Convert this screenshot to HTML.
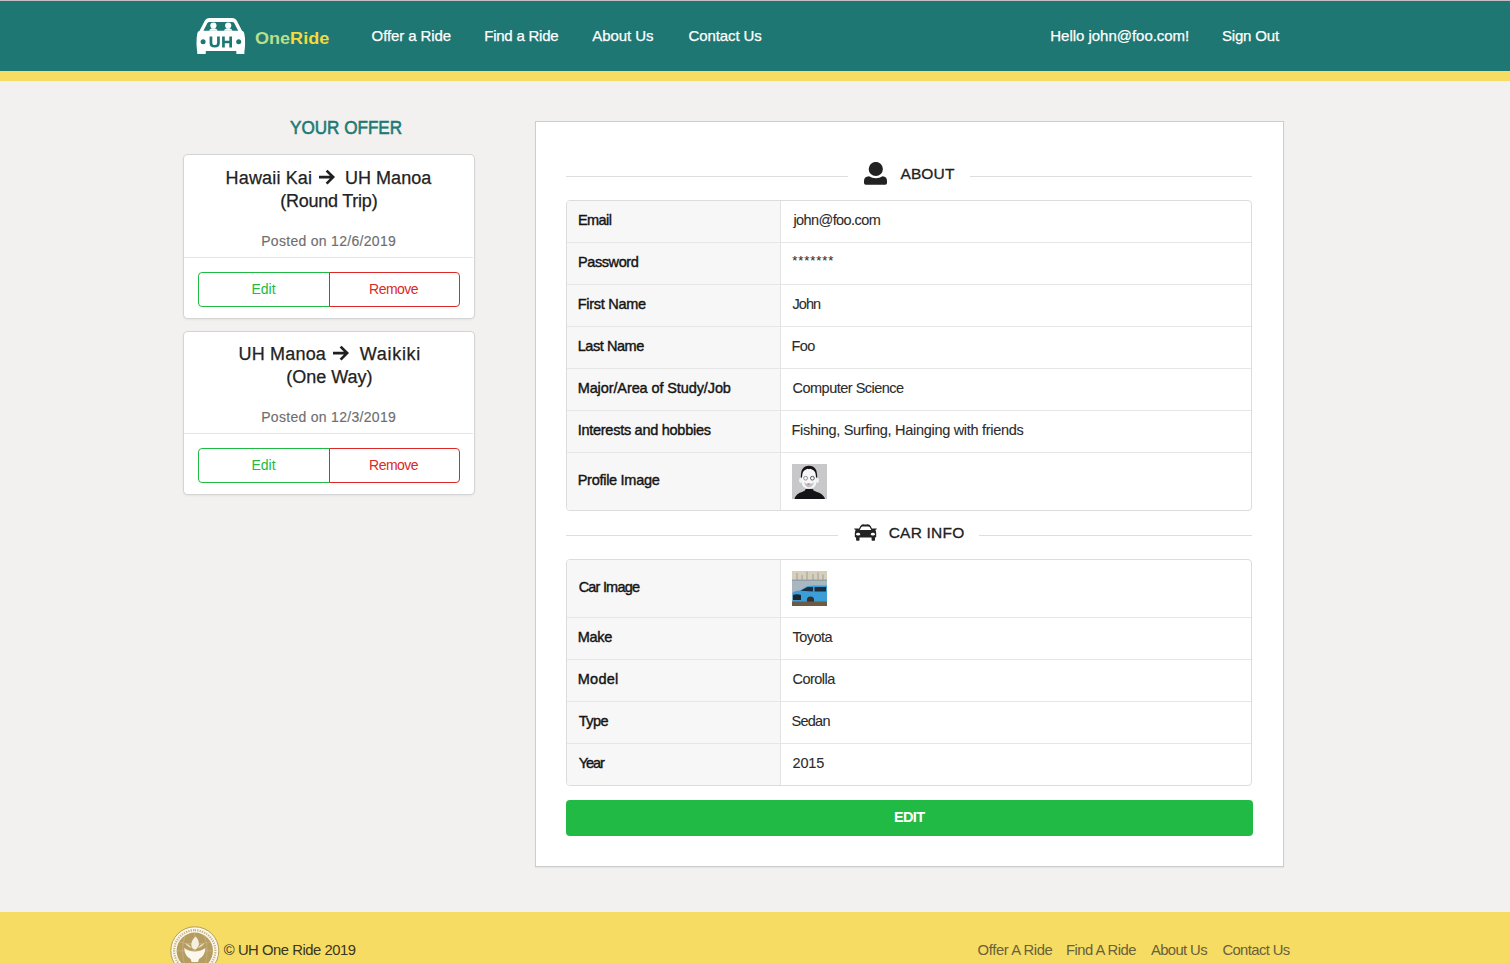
<!DOCTYPE html>
<html>
<head>
<meta charset="utf-8">
<style>
html,body{margin:0;padding:0;}
body{width:1510px;height:963px;overflow:hidden;position:relative;background:#f2f1ef;font-family:"Liberation Sans",sans-serif;}
.t{position:absolute;white-space:nowrap;line-height:1;}
.nav{font-size:15px;color:#fff;-webkit-text-stroke:0.25px #fff;}
.card{position:absolute;left:184px;width:290px;background:#fff;border-radius:4px;box-shadow:0 1px 3px 0 #d4d4d5,0 0 0 1px #d4d4d5;}
.hd{font-size:18px;color:#222;-webkit-text-stroke:0.25px #222;}
.meta{font-size:14px;color:#6e6e6e;-webkit-text-stroke:0.15px #6e6e6e;}
.btn{position:absolute;top:272px;height:35px;box-sizing:border-box;background:#fff;}
.be{left:198px;width:132px;border:1px solid #21ba45;border-radius:4px 0 0 4px;}
.br{left:329px;width:131px;border:1px solid #db2828;border-radius:0 4px 4px 0;}
.bt{font-size:14px;}
.seg{position:absolute;left:535px;top:121px;width:749px;height:746px;box-sizing:border-box;background:#fff;border:1px solid #cdcdcd;box-shadow:0 1px 1px 0 rgba(34,36,38,.06);}
.line{position:absolute;height:1px;background:#dedede;}
.tbl{position:absolute;left:566px;width:686px;box-sizing:border-box;border:1px solid #dcdcdc;border-radius:4px;overflow:hidden;background:#fff;}
.col1{position:absolute;left:0;top:0;bottom:0;width:213px;background:#f7f7f7;border-right:1px solid #e3e3e3;}
.rowb{position:absolute;left:0;right:0;height:1px;background:#e6e6e6;}
.lab{font-size:14.5px;color:#141414;-webkit-text-stroke:0.4px #141414;}
.val{font-size:14.5px;color:#2c2c2c;-webkit-text-stroke:0.1px #2c2c2c;}
.ft{font-size:14.8px;color:#68613c;}
</style>
</head>
<body>
<!-- top line + navbar -->
<div style="position:absolute;left:0;top:0;width:1510px;height:1px;background:#c6bec3"></div>
<div style="position:absolute;left:0;top:1px;width:1510px;height:70px;background:#1e7772"></div>
<div style="position:absolute;left:0;top:71px;width:1510px;height:10px;background:#f6dc62"></div>

<!-- logo -->
<svg style="position:absolute;left:190px;top:14px" width="60" height="46" viewBox="0 0 60 46">
  <path fill="#fff" d="M9.6 16.7 L14.6 7 Q16.2 4.1 19.6 4.1 H42 Q45.4 4.1 47 7 L52 16.7 Q53.6 16.9 54.2 19 Q55.4 24 55.1 30 Q54.9 35 54.4 37.5 V39.2 Q54.4 40.1 53.5 40.1 H47.2 Q46.3 40.1 46.3 39.2 V37 H15.8 V39.2 Q15.8 40.1 14.9 40.1 H8.1 Q7.2 40.1 7.2 39.2 V37.5 Q6.7 35 6.5 30 Q6.3 24 7.4 19 Q8 16.9 9.6 16.7 Z"/>
  <path fill="#1e7772" d="M13.4 16.7 L17.4 8.9 Q18 7.9 19.3 7.9 H42.3 Q43.6 7.9 44.2 8.9 L48.2 16.7 Z"/>
  <circle cx="23.4" cy="11.5" r="3.1" fill="#fff"/>
  <circle cx="38.2" cy="11.5" r="3.1" fill="#fff"/>
  <path fill="#fff" d="M19.2 16.8 Q19.6 14.3 23.4 14.3 Q27.2 14.3 27.6 16.8 Z M34 16.8 Q34.4 14.3 38.2 14.3 Q42 14.3 42.4 16.8 Z"/>
  <circle cx="13.1" cy="27.7" r="2.5" fill="#1e7772"/>
  <circle cx="48.7" cy="27.7" r="2.5" fill="#1e7772"/>
  <path fill="#1e7772" d="M19.6 22.5 H22.3 V28.9 Q22.3 31.1 24.7 31.1 Q27.1 31.1 27.1 28.9 V22.5 H29.8 V29.2 Q29.8 33.6 24.7 33.6 Q19.6 33.6 19.6 29.2 Z M32.1 22.5 H34.8 V26.8 H39.3 V22.5 H42 V33.4 H39.3 V29.2 H34.8 V33.4 H32.1 Z"/>
</svg>
<div class="t" style="left:254.6px;top:29.6px;font-size:17.2px;font-weight:700;transform:scaleX(1.05);transform-origin:0 0"><span style="color:#b8df8c">One</span><span style="color:#f6d93d">Ride</span></div>

<!-- nav items -->
<div class="t nav" style="left:371.6px;top:27.6px;letter-spacing:-0.1px">Offer a Ride</div>
<div class="t nav" style="left:484.2px;top:27.6px;letter-spacing:-0.22px">Find a Ride</div>
<div class="t nav" style="left:592.2px;top:27.6px;letter-spacing:-0.043px">About Us</div>
<div class="t nav" style="left:688.6px;top:27.6px;letter-spacing:-0.122px">Contact Us</div>
<div class="t nav" style="left:1050.3px;top:27.6px;letter-spacing:-0.028px">Hello john@foo.com!</div>
<div class="t nav" style="left:1222px;top:27.6px;letter-spacing:-0.186px">Sign Out</div>

<!-- YOUR OFFER -->
<div class="t" style="left:290.2px;top:117.75px;font-size:19px;color:#1d7a74;-webkit-text-stroke:0.6px #1d7a74;transform:scaleX(0.9);transform-origin:0 0">YOUR OFFER</div>

<!-- card 1 -->
<div class="card" style="top:155px;height:163px"></div>
<div class="line" style="left:184px;width:289px;top:257px;background:#e5e5e5"></div>
<div class="t hd" style="left:225.6px;top:168.7px;letter-spacing:0.156px">Hawaii Kai</div>
<svg style="position:absolute;left:317px;top:167px" width="20" height="20" viewBox="0 0 20 20"><path d="M2 10.1 H15.6 M9.6 3.6 L16.1 10.1 L9.6 16.6" fill="none" stroke="#1f1f1f" stroke-width="2.7" stroke-linejoin="miter"/></svg>
<div class="t hd" style="left:345px;top:168.7px;letter-spacing:0.029px">UH Manoa</div>
<div class="t hd" style="left:280.2px;top:191.7px;letter-spacing:-0.236px">(Round Trip)</div>
<div class="t meta" style="left:261.2px;top:233.6px;letter-spacing:0.3px">Posted on 12/6/2019</div>
<div class="btn be"></div><div class="btn br"></div>
<div class="t bt" style="left:251.4px;top:282px;color:#21ba45">Edit</div>
<div class="t bt" style="left:369.1px;top:282px;color:#db2828;letter-spacing:-0.54px">Remove</div>

<!-- card 2 -->
<div class="card" style="top:332px;height:162px"></div>
<div class="line" style="left:184px;width:289px;top:433px;background:#e5e5e5"></div>
<div class="t hd" style="left:238.5px;top:344.7px;letter-spacing:0.186px">UH Manoa</div>
<svg style="position:absolute;left:331.2px;top:343px" width="20" height="20" viewBox="0 0 20 20"><path d="M2 10.1 H15.6 M9.6 3.6 L16.1 10.1 L9.6 16.6" fill="none" stroke="#1f1f1f" stroke-width="2.7" stroke-linejoin="miter"/></svg>
<div class="t hd" style="left:359.7px;top:344.7px;letter-spacing:0.717px">Waikiki</div>
<div class="t hd" style="left:286.2px;top:367.7px">(One Way)</div>
<div class="t meta" style="left:261.2px;top:409.6px;letter-spacing:0.3px">Posted on 12/3/2019</div>
<div class="btn be" style="top:448px"></div><div class="btn br" style="top:448px"></div>
<div class="t bt" style="left:251.4px;top:458px;color:#21ba45">Edit</div>
<div class="t bt" style="left:369.1px;top:458px;color:#db2828;letter-spacing:-0.54px">Remove</div>

<!-- right segment -->
<div class="seg"></div>
<div class="line" style="left:566px;width:282px;top:176px"></div>
<div class="line" style="left:970px;width:282px;top:176px"></div>
<svg style="position:absolute;left:864px;top:162px" width="23" height="23" viewBox="0 0 23 23"><circle cx="11.8" cy="7" r="7.1" fill="#222"/><path fill="#222" d="M5 14.3 Q8 16.2 11.8 16.2 Q15.6 16.2 18.6 14.3 Q23 14.6 23 19 V21 Q23 22.8 21.2 22.8 H1.8 Q0 22.8 0 21 V19 Q0 14.6 5 14.3 Z"/></svg>
<div class="t" style="left:900.4px;top:165.6px;font-size:15.5px;color:#222;-webkit-text-stroke:0.3px #222;letter-spacing:0.15px">ABOUT</div>

<div class="tbl" style="top:200px;height:311px">
  <div class="col1"></div>
  <div class="rowb" style="top:41px"></div>
  <div class="rowb" style="top:83px"></div>
  <div class="rowb" style="top:125px"></div>
  <div class="rowb" style="top:167px"></div>
  <div class="rowb" style="top:209px"></div>
  <div class="rowb" style="top:251px"></div>
</div>
<div class="t lab" style="left:578px;top:212.5px;letter-spacing:-0.6px">Email</div>
<div class="t lab" style="left:578px;top:254.5px;letter-spacing:-0.414px">Password</div>
<div class="t lab" style="left:577.7px;top:296.5px;letter-spacing:-0.267px">First Name</div>
<div class="t lab" style="left:577.7px;top:338.5px;letter-spacing:-0.438px">Last Name</div>
<div class="t lab" style="left:577.7px;top:380.5px;letter-spacing:-0.105px">Major/Area of Study/Job</div>
<div class="t lab" style="left:577.7px;top:422.5px;letter-spacing:-0.27px">Interests and hobbies</div>
<div class="t lab" style="left:577.7px;top:472.5px;letter-spacing:-0.275px">Profile Image</div>

<div class="t val" style="left:793.4px;top:212.5px;letter-spacing:-0.573px">john@foo.com</div>
<div class="t val" style="left:792.3px;top:253.6px;font-size:13px;letter-spacing:0.92px;color:#333">*******</div>
<div class="t val" style="left:792.5px;top:296.5px;letter-spacing:-0.967px">John</div>
<div class="t val" style="left:791.5px;top:338.5px;letter-spacing:-0.6px">Foo</div>
<div class="t val" style="left:792.5px;top:380.5px;letter-spacing:-0.507px">Computer Science</div>
<div class="t val" style="left:791.5px;top:422.5px;letter-spacing:-0.292px">Fishing, Surfing, Hainging with friends</div>

<!-- profile image -->
<svg style="position:absolute;left:792px;top:464px" width="35" height="35" viewBox="0 0 35 35">
  <rect width="35" height="35" fill="#c8c8ca"/>
  <path fill="#141418" d="M2.5 35 Q4 29.5 10 28 L13 26.5 Q13 25 14 25 H20.5 Q21.5 25 21.5 26.5 L25 28 Q31 29.5 33 35 Z"/>
  <ellipse cx="8.6" cy="16.5" rx="1.6" ry="2.4" fill="#f2f2f4"/>
  <ellipse cx="25.4" cy="16.5" rx="1.6" ry="2.4" fill="#f2f2f4"/>
  <path fill="#f6f6f8" d="M9.6 10 Q10 4 17 4 Q24 4 24.4 10 V18 Q24 24.8 17 24.8 Q10 24.8 9.6 18 Z"/>
  <path fill="#141418" d="M8.9 13.5 Q8.4 1.8 17 1.8 Q25.6 1.8 25.1 13.5 L24 13.5 Q24 6.5 20 5.5 Q18 4.3 17 5.3 Q16 4.3 14 5.5 Q10 6.5 10 13.5 Z"/>
  <circle cx="13.6" cy="14.2" r="1.9" fill="none" stroke="#8c9298" stroke-width="1"/>
  <circle cx="20.4" cy="14.2" r="1.9" fill="none" stroke="#555a60" stroke-width="1"/>
  <path fill="#b9c4d4" d="M12 18 Q17 22.5 22 18 Q21 23 17 23.5 Q13 23 12 18 Z"/>
  <path fill="#e27b3a" d="M15.4 19 L19 19.8 L15.6 21.2 Z"/>
</svg>

<!-- CAR INFO -->
<div class="line" style="left:566px;width:272px;top:535px"></div>
<div class="line" style="left:979px;width:273px;top:535px"></div>
<svg style="position:absolute;left:854px;top:524px" width="23" height="17" viewBox="0 0 23 17">
  <path fill="#222" d="M4.2 6.2 L6.4 2 Q7.4 0.1 9.4 0.2 Q11.5 0.9 13.6 0.2 Q15.6 0.1 16.6 2 L18.8 6.2 Z"/>
  <path fill="#fff" d="M5.7 6.1 L7.2 3.3 Q7.7 2.5 8.8 2.6 H14.2 Q15.3 2.5 15.8 3.3 L17.3 6.1 Z"/>
  <path fill="#222" d="M0.1 5 Q0 4.5 0.6 4.5 H4.8 L5.1 6.1 H1.6 Z M22.9 5 Q23 4.5 22.4 4.5 H18.2 L17.9 6.1 H21.4 Z"/>
  <path fill="#222" d="M1.6 6 H21.4 Q22.2 7.5 22.2 9.5 V12.3 Q22.2 13.6 21 13.6 H2 Q0.8 13.6 0.8 12.3 V9.5 Q0.8 7.5 1.6 6 Z"/>
  <path fill="#222" d="M2.1 13 H5.5 V16.1 Q5.5 16.8 4.8 16.8 H2.8 Q2.1 16.8 2.1 16.1 Z M17.6 13 H21 V16.1 Q21 16.8 20.3 16.8 H18.3 Q17.6 16.8 17.6 16.1 Z"/>
  <ellipse cx="4.1" cy="10.2" rx="2" ry="1.35" fill="#fff"/><ellipse cx="18.9" cy="10.2" rx="2" ry="1.35" fill="#fff"/>
</svg>
<div class="t" style="left:888.7px;top:524.8px;font-size:15.5px;color:#222;-webkit-text-stroke:0.3px #222;letter-spacing:0.214px">CAR INFO</div>

<div class="tbl" style="top:559px;height:227px">
  <div class="col1"></div>
  <div class="rowb" style="top:57px"></div>
  <div class="rowb" style="top:99px"></div>
  <div class="rowb" style="top:141px"></div>
  <div class="rowb" style="top:183px"></div>
</div>
<div class="t lab" style="left:578.7px;top:580px;letter-spacing:-0.8px">Car Image</div>
<div class="t lab" style="left:577.7px;top:630px;letter-spacing:-0.3px">Make</div>
<div class="t lab" style="left:577.7px;top:672px;letter-spacing:0.275px">Model</div>
<div class="t lab" style="left:578.7px;top:714px;letter-spacing:-0.533px">Type</div>
<div class="t lab" style="left:578.7px;top:756px;letter-spacing:-1.033px">Year</div>
<div class="t val" style="left:792.5px;top:630px;letter-spacing:-0.54px">Toyota</div>
<div class="t val" style="left:792.5px;top:672px;letter-spacing:-0.533px">Corolla</div>
<div class="t val" style="left:791.5px;top:714px;letter-spacing:-0.725px">Sedan</div>
<div class="t val" style="left:792.5px;top:756px;letter-spacing:-0.133px">2015</div>

<!-- car image -->
<svg style="position:absolute;left:792px;top:571px" width="35" height="35" viewBox="0 0 35 35">
  <rect width="35" height="35" fill="#a9b7c1"/>
  <rect width="35" height="9" fill="#d5d0bd"/>
  <path fill="#bdb7a5" d="M4 9 V2 H6 V9 Z M9 9 V4 H11 V9 Z M14 9 V0.5 H16 V9 Z M20 9 V3 H22 V9 Z M25 9 V1.5 H27 V9 Z M30 9 V3.5 H32 V9 Z"/>
  <rect y="8.6" width="35" height="1.2" fill="#8e9aa3"/>
  <path fill="#3c9ed6" d="M0.5 22 Q2 20 8 19.6 L15 15.2 Q17 14.6 22 14.6 H35 V31 H0.5 Z"/>
  <path fill="#1a2e40" d="M8.5 19.8 L15.5 16 H21 V20.5 Z M22.5 16 H34 V20.5 H22.5 Z"/>
  <path fill="#1e2430" d="M1 24 Q5 22.5 9 24 V29 H1 Z"/>
  <circle cx="18.5" cy="29" r="3.6" fill="#3a2f2a"/>
  <rect y="30.5" width="35" height="4.5" fill="#6e5b44"/>
</svg>

<!-- EDIT button -->
<div style="position:absolute;left:566px;top:800px;width:687px;height:36px;background:#21ba45;border-radius:4px"></div>
<div class="t" style="left:893.9px;top:809.7px;font-size:14.5px;font-weight:700;color:#fff;letter-spacing:-0.6px">EDIT</div>

<!-- footer -->
<div style="position:absolute;left:0;top:912px;width:1510px;height:51px;background:#f6dc62"></div>
<svg style="position:absolute;left:170px;top:926px" width="50" height="50" viewBox="0 0 50 50">
  <circle cx="24.8" cy="24.8" r="24" fill="#fbf8ee" stroke="#b49d62" stroke-width="1"/>
  <path d="M24.8 4.2 A20.6 20.6 0 1 1 24.79 4.2" fill="none" stroke="#c8b27a" stroke-width="2.2" stroke-dasharray="1.3 1.1"/>
  <circle cx="24.8" cy="24.8" r="18.2" fill="#b69c60"/>
  <path d="M24.8 6.6 V43 M6.6 24.8 H43 M15 9.5 Q10 24.8 15 40 M34.6 9.5 Q39.6 24.8 34.6 40 M9 16 Q24.8 20 40.6 16" fill="none" stroke="#cdb987" stroke-width="0.6"/>
  <path fill="#fbf8ee" d="M14.2 22 Q19 25.5 24.8 25.5 Q30.6 25.5 35.4 22 Q35 30 29 33 L28 36 H21.6 L20.6 33 Q14.6 30 14.2 22 Z"/>
  <path fill="#f4efe0" d="M25.6 10.5 Q30 15 28.5 20 Q26.8 23.5 24.8 23.5 Q22.5 23.5 21.5 20 Q20.5 15 25.6 10.5 Z"/>
  <path fill="#e8dfc6" d="M15 17 Q19 18 22 22 Q18 21.5 15 17 Z M34.6 17 Q30.6 18 27.6 22 Q31.6 21.5 34.6 17 Z"/>
</svg>
<div class="t ft" style="left:223.8px;top:943.2px;color:#3a3520;letter-spacing:-0.459px">© UH One Ride 2019</div>
<div class="t ft" style="left:977.6px;top:942.6px;letter-spacing:-0.391px">Offer A Ride</div>
<div class="t ft" style="left:1066px;top:942.6px;letter-spacing:-0.53px">Find A Ride</div>
<div class="t ft" style="left:1151px;top:942.6px;letter-spacing:-0.614px">About Us</div>
<div class="t ft" style="left:1222.4px;top:942.6px;letter-spacing:-0.6px">Contact Us</div>
</body>
</html>
